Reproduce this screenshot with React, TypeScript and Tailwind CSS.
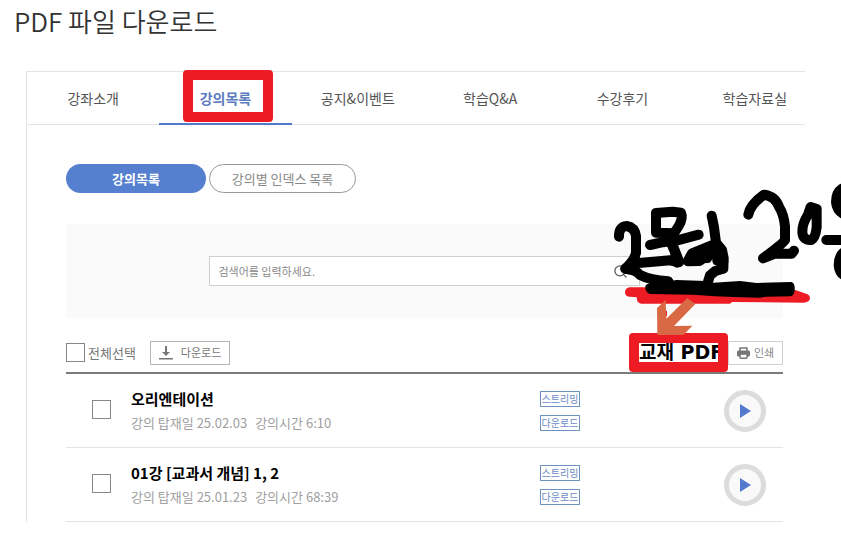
import { FiSearch } from "react-icons/fi";

interface LectureProps {
    id: string;
    title: string;
    date: string;
    time: string;
}

const tabs: string[] = ["강좌소개", "강의목록", "공지&이벤트", "학습Q&A", "수강후기", "학습자료실"];

const lectures: LectureProps[] = [
    { id: "0", title: "오리엔테이션", date: "25.02.03", time: "6:10" },
    { id: "1", title: "01강 [교과서 개념] 1, 2", date: "25.01.23", time: "68:39" },
];

function Tabs() {
    return (
        <div className="overflow-hidden">
            <nav className="-mr-4 grid grid-cols-6 border-b border-[#e4e4e4]">
                {tabs.map((tab) => (
                    <a
                        key={tab}
                        href="#"
                        className={
                            tab === "강의목록"
                                ? "-mb-px flex h-[53px] items-center justify-center border-b-2 border-[#5279cc] text-sm font-bold text-[#5b7cc0]"
                                : "flex h-[52px] items-center justify-center text-sm text-[#555]"
                        }
                    >
                        {tab}
                    </a>
                ))}
            </nav>
        </div>
    );
}

// freehand marks drawn over the search area
function Scribble() {
    return (
        <svg
            className="pointer-events-none absolute -top-11 -right-[58px] z-20 h-[200px] w-[241px]"
            viewBox="0 0 723 600"
            fill="none"
            strokeLinecap="round"
            strokeLinejoin="round"
            aria-hidden="true"
        >
            <path
                d="M88 322 Q75 325 75 338 Q76 350 90 350 L110 352 Q110 370 124 371 L390 371 L396 366 L612 368 Q630 366 630 354 Q628 342 618 341 L586 330 L140 322 Z"
                fill="#ed1c24"
            />
            <path d="M196 394 L201 392 L201 408 L196 411 Z" fill="#ed1c24" />
            <path
                d="M172 465 L171 385 L197 359 L199 416 L262 354 L286 372 L222 438 L277 437 L250 465 Z"
                fill="#d96844"
            />
            <g stroke="#000" strokeWidth="30">
                <path d="M57 170 Q56 140 80 138 Q104 142 108 168 L108 218 Q104 240 76 266 L106 250 L160 245 L210 241 L234 246" />
                <path d="M76 266 Q110 270 120 285 Q150 300 205 304 L212 322 L152 325" />
                <path d="M168 158 L168 99 L218 95 L243 98 Q250 115 236 138 L222 160 L168 158" />
                <path d="M150 195 L182 188 L232 181 L296 164" />
                <path d="M212 186 L224 214 L232 248 M216 190 L238 246" />
                <path d="M264 242 L276 220 L335 196 M264 244 L298 243 L335 220 L345 208 M270 236 L322 234" />
                <path d="M335 107 L342 142 L348 188 L366 210 L371 234 L370 266 L346 273 L330 286 L322 312" />
                <path d="M348 196 L352 242 L370 244" />
                <path d="M445 104 Q450 74 492 44 Q526 48 538 82 Q552 104 555 140 L555 180 Q550 190 489 235 L525 221 L575 221 L582 212" />
                <path d="M632 81 L650 87 L650 142 Q646 174 634 180 Q608 182 607 156 Q606 132 624 104 Z" />
                <path d="M726 26 Q708 38 708 66 Q710 90 730 102" />
                <path d="M679 180 L740 180" />
                <path d="M730 218 Q716 230 716 256 Q718 278 732 286" />
            </g>
            <path
                d="M136 318 Q140 310 152 312 L230 300 L318 303 L340 308 L420 303 L470 309 L574 306 Q586 310 584 330 Q584 345 572 349 L500 350 L480 353 L400 351 L345 349 L280 344 L150 342 Q136 338 136 318 Z"
                fill="#000"
            />
        </svg>
    );
}

function Search() {
    return (
        <section className="relative mt-[31px] flex h-[94px] items-center justify-center bg-[#fafafa]">
            <div className="relative -mt-px w-[60%]">
                <input
                    type="text"
                    aria-label="검색어"
                    placeholder="검색어를 입력하세요."
                    className="block h-[30px] w-full border border-[#d0d0d0] bg-white px-2 text-[11px] placeholder:text-[#8a8a8a]"
                />
                <button type="button" aria-label="검색" className="absolute top-2 right-3 text-[#555]">
                    <FiSearch className="h-[15px] w-[15px]" />
                </button>
            </div>
            <Scribble />
        </section>
    );
}

function Toolbar() {
    return (
        <div className="mt-[15px] flex h-[41px] items-center border-b-2 border-[#7b7b7b]">
            <label className="flex items-center gap-[3px] text-[13px] text-[#777]">
                <input type="checkbox" className="h-[19px] w-[19px] appearance-none border border-[#888] bg-white" />
                전체선택
            </label>
            <button
                type="button"
                className="ml-[14px] flex h-6 items-center gap-2 border border-[#b5b5b5] px-2 text-[11px] text-[#777]"
            >
                <svg className="h-[14px] w-[14px]" viewBox="0 0 14 14" fill="#777" aria-hidden="true">
                    <path d="M6 0h2v6h3L7 10 3 6h3zM0 12h14v1.4H0z" />
                </svg>
                다운로드
            </button>
            <a
                href="#"
                className="z-10 ml-auto flex h-[39px] w-[99px] items-center overflow-hidden rounded border-10 border-[#ed1c24] bg-white font-['DejaVu_Sans','Noto_Sans_CJK_KR',sans-serif] text-[19px] leading-none font-bold whitespace-nowrap text-black"
            >
                교재 PDF
            </a>
            <button
                type="button"
                className="flex h-6 w-[55px] items-center justify-center gap-1 border border-[#d0d0d0] text-[11px] text-[#888]"
            >
                <svg className="h-3 w-[13px]" viewBox="0 0 13 12" aria-hidden="true">
                    <path d="M3 4V1h7v3" fill="none" stroke="#777" strokeWidth="1.6" strokeLinejoin="round" />
                    <rect y="3.5" width="13" height="6" rx="1.6" fill="#777" />
                    <rect x="3" y="7" width="7" height="4.2" rx=".6" fill="#fff" stroke="#777" strokeWidth="1.4" />
                </svg>
                인쇄
            </button>
        </div>
    );
}

function LectureList() {
    return (
        <ul>
            {lectures.map((lecture) => (
                <li key={lecture.id} className="flex h-[74px] items-center border-b border-[#e4e4e4] pr-[17px] pl-[26px]">
                    <input
                        id={`lecture-${lecture.id}`}
                        type="checkbox"
                        className="-mt-[2px] h-[19px] w-[19px] appearance-none border border-[#888] bg-white"
                    />
                    <div className="ml-5 flex-1">
                        <label htmlFor={`lecture-${lecture.id}`} className="block text-[15px] leading-6 font-bold text-black">
                            {lecture.title}
                        </label>
                        <p className="flex gap-2 text-[13px] leading-6 text-[#a0a0a0]">
                            <span>강의 탑재일 {lecture.date}</span>
                            <span>강의시간 {lecture.time}</span>
                        </p>
                    </div>
                    <div className="mr-36 flex flex-col gap-2 text-[10px] leading-none text-[#6b8bc4]">
                        <button type="button" className="h-4 w-10 border border-[#6f93c0]">스트리밍</button>
                        <button type="button" className="h-4 w-10 border border-[#6f93c0]">다운로드</button>
                    </div>
                    <button
                        type="button"
                        aria-label="재생"
                        className="flex h-[42px] w-[42px] items-center justify-center rounded-full border-5 border-[#dcdcdc] bg-[#f9f9f9]"
                    >
                        <svg className="ml-px h-[14px] w-[11px]" viewBox="0 0 11 14" fill="#5279cc" aria-hidden="true">
                            <path d="M0 0l11 7-11 7z" />
                        </svg>
                    </button>
                </li>
            ))}
        </ul>
    );
}

export default function App() {
    return (
        <main className="min-h-screen overflow-hidden bg-white pb-7 font-['Noto_Sans_CJK_KR',sans-serif]">
            <h1 className="px-[14px] pt-[3px] text-[26px] leading-9 font-[350] text-[#333]">PDF 파일 다운로드</h1>

            <div className="relative mt-8 mr-9 ml-[26px] border-t border-l border-[#e4e4e4]">
                <Tabs />
                <div className="absolute -top-[2px] left-[20%] h-[52px] w-[90px] rounded border-10 border-[#ed1c24]" />

                <div className="mr-[22px] ml-[39px] pt-[39px]">
                    <div className="flex gap-[3px] text-[13px]">
                        <button type="button" className="h-[29px] w-[140px] rounded-full bg-[#577fd0] font-bold text-white">
                            강의목록
                        </button>
                        <button type="button" className="h-[29px] w-[147px] rounded-full border border-[#999] text-[#888]">
                            강의별 인덱스 목록
                        </button>
                    </div>

                    <Search />
                    <Toolbar />
                    <LectureList />
                </div>
            </div>
        </main>
    );
}
